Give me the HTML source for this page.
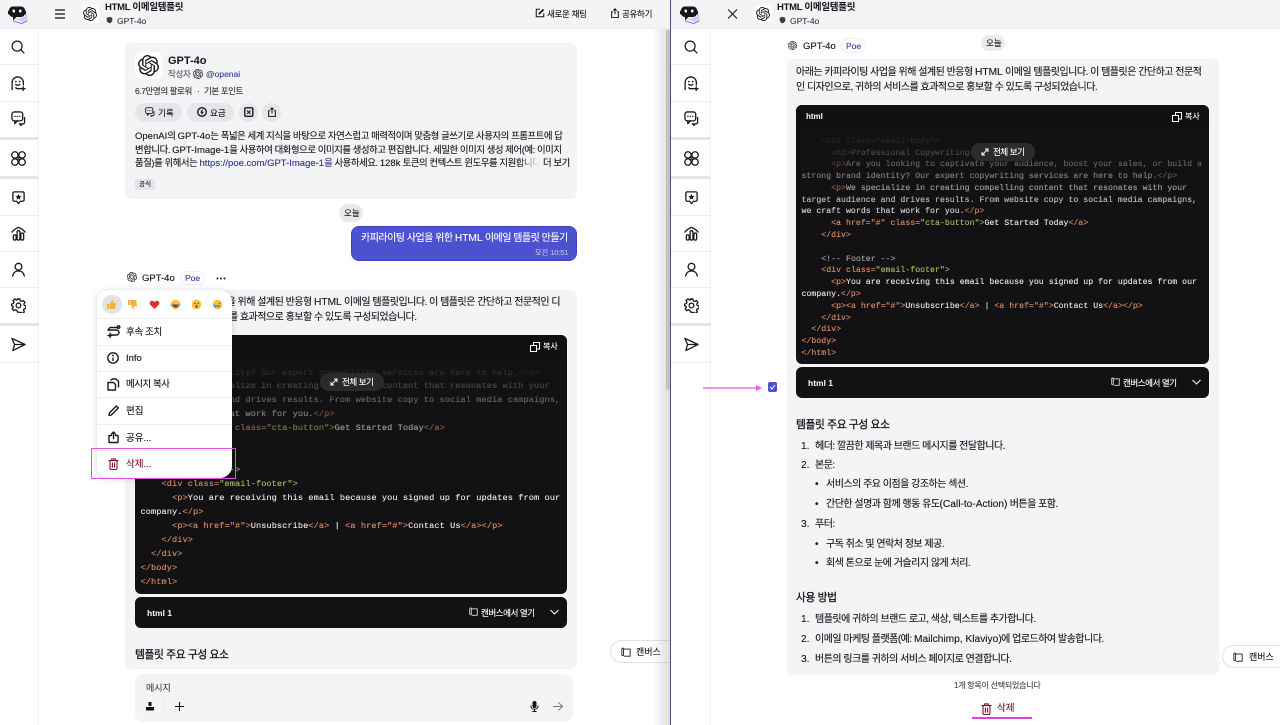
<!DOCTYPE html>
<html lang="ko"><head><meta charset="utf-8"><title>HTML 이메일템플릿</title>
<style>
*{box-sizing:border-box}
html,body{margin:0;padding:0;width:1280px;height:725px;overflow:hidden;background:#fff}
body{font-family:"Liberation Sans","Noto Sans CJK KR",sans-serif;color:#15151a;font-size:10px;position:relative}
.a{position:absolute}
.t{position:absolute;white-space:nowrap;line-height:14px;height:14px;-webkit-text-stroke:.12px currentColor}
.b{font-weight:700;-webkit-text-stroke:0}
.h{-webkit-text-stroke:.3px currentColor}
.m{font-size:10px;letter-spacing:-.05em}
.l{letter-spacing:0;font-size:10.2px}
.n{letter-spacing:-.035em}
.bio{font-size:9.4px;letter-spacing:-.045em}
.bio .l{font-size:9.5px;letter-spacing:0}
.bar{position:absolute;background:#f4f4f6}
.line{position:absolute;background:#eeeef0;height:1px}
.thick{position:absolute;background:#e4e4e8;height:3px}
pre{position:absolute;margin:0;font-family:"Liberation Mono",monospace;color:#ededed;white-space:pre;-webkit-text-stroke:.1px currentColor}
.k{color:#e0906a}.s{color:#a6c45e}.c{color:#a5a5a5}
svg{position:absolute;overflow:visible}
.i{fill:none;stroke:#1a1a1f;stroke-width:1.4;stroke-linecap:round;stroke-linejoin:round}
.pill{position:absolute;border-radius:10px;background:#2b2b2d;height:18px}
</style></head><body>

<svg width="0" height="0" style="position:absolute">
<defs>
<symbol id="logo" viewBox="0 0 21 21"><path d="M7 15l8 2.500 4.500-2.500V9.500L17 10v3z" fill="#d8c4f8"/><path d="M5 17l9 2.500 5.500-3" fill="none" stroke="#8f6cf0" stroke-width="1"/><rect x="0" y="6.500" width="2" height="4" rx="1" fill="#15151a"/><rect x="16" y="6.500" width="2" height="4" rx="1" fill="#15151a"/><rect x="1" y="2.500" width="16" height="10.500" rx="4" fill="#15151a"/><rect x="4.500" y="5.500" width="2.500" height="3" rx="1" fill="#fff"/><rect x="11" y="5.500" width="2.500" height="3" rx="1" fill="#fff"/><path d="M5 12.500v4l4-4z" fill="#15151a"/></symbol>
<symbol id="oai" viewBox="0 0 24 24"><path fill="#15151a" d="M22.2819 9.8211a5.9847 5.9847 0 0 0-.5157-4.9108 6.0462 6.0462 0 0 0-6.5098-2.9A6.0651 6.0651 0 0 0 4.9807 4.1818a5.9847 5.9847 0 0 0-3.9977 2.9 6.0462 6.0462 0 0 0 .7427 7.0966 5.98 5.98 0 0 0 .511 4.9107 6.051 6.051 0 0 0 6.5146 2.9001A5.9847 5.9847 0 0 0 13.2599 24a6.0557 6.0557 0 0 0 5.7718-4.2058 5.9894 5.9894 0 0 0 3.9977-2.9001 6.0557 6.0557 0 0 0-.7475-7.0729zm-9.022 12.6081a4.4755 4.4755 0 0 1-2.8764-1.0408l.1419-.0804 4.7783-2.7582a.7948.7948 0 0 0 .3927-.6813v-6.7369l2.02 1.1686a.071.071 0 0 1 .038.052v5.5826a4.504 4.504 0 0 1-4.4945 4.4944zm-9.6607-4.1254a4.4708 4.4708 0 0 1-.5346-3.0137l.142.0852 4.783 2.7582a.7712.7712 0 0 0 .7806 0l5.8428-3.3685v2.3324a.0804.0804 0 0 1-.0332.0615L9.74 19.9502a4.4992 4.4992 0 0 1-6.1408-1.6464zM2.3408 7.8956a4.485 4.485 0 0 1 2.3655-1.9728V11.6a.7664.7664 0 0 0 .3879.6765l5.8144 3.3543-2.0201 1.1685a.0757.0757 0 0 1-.071 0l-4.8303-2.7865A4.504 4.504 0 0 1 2.3408 7.872zm16.5963 3.8558L13.1038 8.364 15.1192 7.2a.0757.0757 0 0 1 .071 0l4.8303 2.7913a4.4944 4.4944 0 0 1-.6765 8.1042v-5.6772a.79.79 0 0 0-.407-.667zm2.0107-3.0231l-.142-.0852-4.7735-2.7818a.7759.7759 0 0 0-.7854 0L9.409 9.2297V6.8974a.0662.0662 0 0 1 .0284-.0615l4.8303-2.7866a4.4992 4.4992 0 0 1 6.6802 4.66zM8.3065 12.863l-2.02-1.1638a.0804.0804 0 0 1-.038-.0567V6.0742a4.4992 4.4992 0 0 1 7.3757-3.4537l-.142.0805L8.704 5.459a.7948.7948 0 0 0-.3927.6813zm1.0976-2.3654l2.602-1.4998 2.6069 1.4998v2.9994l-2.5974 1.4997-2.6067-1.4997Z"/></symbol>
<symbol id="search" viewBox="0 0 16 16"><circle class="i" cx="7" cy="7" r="5.700"/><path class="i" d="M11.200 11.200l3.600 3.600"/></symbol>
<symbol id="ghost" viewBox="0 0 16 16"><path class="i" d="M1.200 14.500V7a6 6 0 0 1 12 0v2.500M10 13.500H6.500c-.8 0-1.200-.5-1.200-1.200"/><circle cx="5.200" cy="6" r=".9" fill="#1a1a1f"/><circle cx="9.200" cy="6" r=".9" fill="#1a1a1f"/><path class="i" d="M5 9c1.300 1 3 1 4.400 0M13 11.500v4M11 13.500h4"/></symbol>
<symbol id="chats" viewBox="0 0 16 16"><rect class="i" x="1" y="1" width="11.500" height="9.500" rx="2.500"/><path class="i" d="M4 10.500v3l3-3M14.500 7v5c0 1-1 1.800-2 1.800H9l2 1.600"/><circle cx="4.200" cy="5.700" r=".8" fill="#1a1a1f"/><circle cx="6.800" cy="5.700" r=".8" fill="#1a1a1f"/><circle cx="9.400" cy="5.700" r=".8" fill="#1a1a1f"/></symbol>
<symbol id="apps" viewBox="0 0 16 16"><g class="i"><circle cx="4.200" cy="4.200" r="3.400"/><circle cx="11.800" cy="4.200" r="3.400"/><circle cx="4.200" cy="11.800" r="3.400"/><circle cx="11.800" cy="11.800" r="3.400"/><path d="M6.800 6.800l2.400 2.400M9.200 6.800L6.800 9.200"/></g></symbol>
<symbol id="star" viewBox="0 0 16 16"><path class="i" d="M3.500 2h9A1.500 1.500 0 0 1 14 3.500v7a1.500 1.500 0 0 1-1.500 1.500H10l-2 2.500L6 12H3.500A1.500 1.500 0 0 1 2 10.500v-7A1.500 1.500 0 0 1 3.500 2z"/><path d="M8 4.200l1 2.100 2.200.3-1.600 1.500.4 2.200L8 9.200l-2 1.100.4-2.200L4.800 6.600 7 6.300z" fill="#1a1a1f"/></symbol>
<symbol id="build" viewBox="0 0 16 16"><path class="i" d="M1 6.500C3 4 5.500 2.500 8 1.500c2.500 1 5 2.500 7 5"/><rect class="i" x="6.500" y="5" width="3" height="10" rx="1.400"/><rect class="i" x="2.500" y="9.500" width="3" height="5.500" rx="1.400"/><rect class="i" x="10.500" y="7.500" width="3" height="7.500" rx="1.400"/></symbol>
<symbol id="user" viewBox="0 0 16 16"><circle class="i" cx="8" cy="5" r="3.600"/><path class="i" d="M1.800 15c.5-3.500 3-5.500 6.200-5.500s5.700 2 6.200 5.500"/></symbol>
<symbol id="gear" viewBox="0 0 16 16"><circle class="i" cx="8" cy="8" r="2.500"/><path class="i" d="M6.700 1h2.600l.4 2 1.500.7 1.800-1 1.700 2-1.200 1.700.4 1.500 1.900.6v2.600l-2 .5-.7 1.400 1 1.800-2 1.700-1.600-1.200-1.600.4L8 15H6.700l-.6-1.800-1.500-.7-1.800 1-1.700-2 1.200-1.700L1.900 9 .5 8.400V6.500l1.800-.6.700-1.500-1-1.700 2-1.700 1.700 1.200 1.500-.6z" transform="translate(.2 0)"/></symbol>
<symbol id="send" viewBox="0 0 16 16"><path class="i" d="M1 1.500L15 8 2 14.500l1.800-6.500zM3.800 8H15"/></symbol>
<symbol id="trash" viewBox="0 0 12 13"><path d="M1 2.800h10M4 2.500V1h4v1.500M2.200 3v8.300c0 .7.500 1.200 1.200 1.200h5.200c.7 0 1.200-.5 1.200-1.200V3M4.800 5.500v4.500M7.200 5.500v4.500" fill="none" stroke="#7a1234" stroke-width="1.200" stroke-linecap="round"/></symbol>
<symbol id="canvas" viewBox="0 0 12 12"><path d="M3 2.500h8v8.500H3.500M3 2.500C3 .8 1 .8 1 2.500v6.500c0 1.800 2 1.800 2 0z" fill="none" stroke="currentColor" stroke-width="1"/></symbol>
<symbol id="compose" viewBox="0 0 12 12"><path d="M10.500 6.500v4h-9v-9h4.500" fill="none" stroke="#111" stroke-width="1.200"/><path d="M4 8l.5-2L9.500 1 11 2.500 6 7.500z" fill="#111"/></symbol>
<symbol id="share" viewBox="0 0 12 12"><path d="M3.500 4.500H2v7h8v-7H8.500M6 7.500V1M4 3l2-2 2 2" fill="none" stroke="#111" stroke-width="1.200"/></symbol>
<symbol id="shield" viewBox="0 0 10 10"><path d="M5 .5l4 1.300v3.700c0 2-2 3.500-4 4.200-2-.7-4-2.200-4-4.200V1.800z" fill="#3c3c42"/></symbol>
</defs>
</svg>

<!-- LEFT PANE -->
<div class="bar" style="left:0;top:0;width:670px;height:29px;border-bottom:1px solid #ececee"></div>
<div class="a" style="left:38px;top:29px;width:1px;height:696px;background:#f0f0f2"></div>
<svg style="left:8px;top:4px" width="21" height="21"><use href="#logo"/></svg>
<div class="line" style="left:0;top:64px;width:38px"></div>
<div class="line" style="left:0;top:101px;width:38px"></div>
<div class="thick" style="left:0;top:137px;width:38px"></div>
<div class="thick" style="left:0;top:176px;width:38px"></div>
<div class="line" style="left:0;top:215px;width:38px"></div>
<div class="line" style="left:0;top:251px;width:38px"></div>
<div class="line" style="left:0;top:287px;width:38px"></div>
<div class="thick" style="left:0;top:323px;width:38px"></div>
<div class="line" style="left:0;top:362px;width:38px"></div>
<svg style="left:11px;top:40px" width="14" height="14"><use href="#search"/></svg>
<svg style="left:11px;top:76px" width="15" height="15"><use href="#ghost"/></svg>
<svg style="left:11px;top:111px" width="15" height="15"><use href="#chats"/></svg>
<svg style="left:11px;top:151px" width="15" height="15"><use href="#apps"/></svg>
<svg style="left:11px;top:190px" width="15" height="15"><use href="#star"/></svg>
<svg style="left:11px;top:226px" width="15" height="15"><use href="#build"/></svg>
<svg style="left:11px;top:262px" width="15" height="15"><use href="#user"/></svg>
<svg style="left:11px;top:298px" width="15" height="15"><use href="#gear"/></svg>
<svg style="left:11px;top:337px" width="15" height="15"><use href="#send"/></svg>

<svg style="left:55px;top:9px" width="10" height="10"><path d="M0 1h10M0 5h10M0 9h10" stroke="#111" stroke-width="1.300"/></svg>
<div class="a" style="left:81px;top:5px;width:18px;height:18px;border-radius:5px;background:#fff"></div>
<svg style="left:83px;top:7px" width="14" height="14"><use href="#oai"/></svg>
<div class="t b" style="left:105px;top:1px;font-size:9.500px;letter-spacing:-.03em">HTML 이메일템플릿</div>
<svg style="left:106px;top:16px" width="7" height="8"><use href="#shield"/></svg>
<div class="t" style="left:117px;top:13.500px;font-size:8.500px;color:#3f3f46">GPT-4o</div>
<svg style="left:535px;top:8px" width="10" height="10"><use href="#compose"/></svg>
<div class="t n" style="left:547px;top:7px;font-size:8.500px">새로운 채팅</div>
<svg style="left:610px;top:8px" width="10" height="10"><use href="#share"/></svg>
<div class="t n" style="left:622px;top:7px;font-size:8.500px">공유하기</div>

<!-- Bot card -->
<div class="a" style="left:125px;top:43px;width:452px;height:156px;background:#f4f4f6;border-radius:6px"></div>
<div class="a" style="left:135px;top:52px;width:27px;height:27px;background:#fff;border-radius:7px"></div>
<svg style="left:138px;top:55px" width="21" height="21"><use href="#oai"/></svg>
<div class="t b" style="left:168px;top:53.500px;font-size:11px">GPT-4o</div>
<div class="t n" style="left:168px;top:67px;font-size:8.500px;color:#55555c">작성자</div>
<svg style="left:193px;top:69px" width="10" height="10"><use href="#oai"/></svg>
<div class="t" style="left:206px;top:67px;font-size:8.500px;color:#3a3f9a">@openai</div>
<div class="t n" style="left:135px;top:84px;font-size:8.500px;color:#333;letter-spacing:-.05em">6.7만명의 팔로워</div>
<div class="t" style="left:197px;top:84px;font-size:8.500px;color:#333">·</div>
<div class="t n" style="left:204px;top:84px;font-size:8.500px;color:#333;letter-spacing:-.05em">기본 포인트</div>
<div class="a" style="left:135px;top:103px;width:47px;height:19px;border-radius:10px;background:#e6e6ea"></div>
<div class="a" style="left:187px;top:103px;width:47px;height:19px;border-radius:10px;background:#e6e6ea"></div>
<div class="a" style="left:239px;top:103px;width:19px;height:19px;border-radius:10px;background:#e6e6ea"></div>
<div class="a" style="left:262px;top:103px;width:19px;height:19px;border-radius:10px;background:#e6e6ea"></div>
<svg style="left:145px;top:107px" width="10" height="10"><use href="#chats"/></svg>
<div class="t" style="left:158px;top:105.500px;font-size:8.500px">기록</div>
<svg style="left:197px;top:107px" width="10" height="10"><circle class="i" cx="5" cy="5" r="4.300"/><path d="M5.500 2.500L4 5.200H6L4.500 7.500" stroke="#111" fill="none"/></svg>
<div class="t" style="left:210px;top:105.500px;font-size:8.500px">요금</div>
<svg style="left:244px;top:107px" width="10" height="10"><rect class="i" x=".8" y=".8" width="8" height="8.500" rx="1"/><path d="M3 3.500l3.500 3.500M6.500 3.500L3 7" stroke="#111"/></svg>
<svg style="left:267px;top:107px" width="10" height="10"><use href="#share"/></svg>
<div class="t bio" style="left:135px;top:129px"><span class="l">OpenAI</span>의 <span class="l">GPT-4o</span>는 폭넓은 세계 지식을 바탕으로 자연스럽고 매력적이며 맞춤형 글쓰기로 사용자의 프롬프트에 답</div>
<div class="t bio" style="left:135px;top:142.500px">변합니다. <span class="l">GPT-Image-1</span>을 사용하여 대화형으로 이미지를 생성하고 편집합니다. 세밀한 이미지 생성 제어(예: 이미지</div>
<div class="t bio" style="left:135px;top:155.500px">품질)를 위해서는 <span style="color:#2f3591"><span class="l">https://poe.com/GPT-Image-1</span>을</span> 사용하세요. <span class="l">128k</span> 토큰의 컨텍스트 윈도우를 지원합니다.</div>
<div class="a" style="left:518px;top:155px;width:22px;height:14px;background:linear-gradient(90deg,rgba(244,244,246,0),#f4f4f6)"></div>
<div class="t bio" style="left:540px;top:155.500px;background:#f4f4f6;width:30px;padding-left:3px">더 보기</div>
<div class="a" style="left:135px;top:179px;width:20px;height:11px;border-radius:2px;background:#e4e4e8"></div>
<div class="t" style="left:139px;top:177.500px;font-size:6.500px">공식</div>

<div class="a" style="left:339px;top:204px;width:24px;height:18px;border-radius:9px;background:#e9e9ec"></div>
<div class="t" style="left:344px;top:206px;font-size:8.500px">오늘</div>

<div class="a" style="left:351px;top:226px;width:226px;height:35px;border-radius:8px;background:#4c51cf;border:1px solid #3c42c4"></div>
<div class="t m" style="left:361px;top:232px;color:#fff">카피라이팅 사업을 위한 <span class="l">HTML</span> 이메일 템플릿 만들기</div>
<div class="t" style="left:535px;top:245.500px;font-size:7.200px;color:#c3c5f0">오전 10:51</div>

<svg style="left:127px;top:272px" width="10" height="10"><use href="#oai"/></svg>
<div class="t" style="left:142px;top:271.500px;font-size:9.500px">GPT-4o</div>
<div class="a" style="left:180px;top:271px;width:25px;height:14px;border-radius:7px;background:#fff;border:1px solid #eeeef0"></div>
<div class="t" style="left:185px;top:271px;font-size:8.500px;color:#3a3f9a">Poe</div>
<svg style="left:216px;top:277px" width="10" height="3"><circle cx="1.500" cy="1.500" r="1" fill="#222"/><circle cx="5" cy="1.500" r="1" fill="#222"/><circle cx="8.500" cy="1.500" r="1" fill="#222"/></svg>

<div class="a" style="left:125px;top:290px;width:452px;height:379px;background:#f4f4f6;border-radius:6px"></div>
<div class="t m" style="left:135px;top:295.500px">아래는 카피라이팅 사업을 위해 설계된 반응형 <span class="l">HTML</span> 이메일 템플릿입니다. 이 템플릿은 간단하고 전문적인 디</div>
<div class="t m" style="left:135px;top:310.500px">자인으로, 귀하의 서비스를 효과적으로 홍보할 수 있도록 구성되었습니다.</div>

<!-- left code -->
<div class="a" style="left:135px;top:335px;width:432px;height:259px;background:#121214;border-radius:6px;overflow:hidden">
<pre style="left:5.500px;top:31.500px;font-size:8.620px;line-height:13.950px;letter-spacing:.08px">strong brand identity? Our expert copywriting services are here to help.<span class="k">&lt;/p&gt;</span>
      <span class="k">&lt;p&gt;</span>We specialize in creating compelling content that resonates with your
target audience and drives results. From website copy to social media campaigns,
we craft words that work for you.<span class="k">&lt;/p&gt;</span>
      <span class="k">&lt;a href=</span><span class="k">"#"</span> <span class="k">class=</span><span class="s">"cta-button"</span><span class="k">&gt;</span>Get Started Today<span class="k">&lt;/a&gt;</span>
    <span class="k">&lt;/div&gt;</span>

    <span class="c">&lt;!-- Footer --&gt;</span>
    <span class="k">&lt;div class=</span><span class="s">"email-footer"</span><span class="k">&gt;</span>
      <span class="k">&lt;p&gt;</span>You are receiving this email because you signed up for updates from our
company.<span class="k">&lt;/p&gt;</span>
      <span class="k">&lt;p&gt;&lt;a href=</span><span class="k">"#"</span><span class="k">&gt;</span>Unsubscribe<span class="k">&lt;/a&gt;</span> | <span class="k">&lt;a href=</span><span class="k">"#"</span><span class="k">&gt;</span>Contact Us<span class="k">&lt;/a&gt;&lt;/p&gt;</span>
    <span class="k">&lt;/div&gt;</span>
  <span class="k">&lt;/div&gt;</span>
<span class="k">&lt;/body&gt;</span>
<span class="k">&lt;/html&gt;</span></pre>
<div class="a" style="left:0;top:24px;width:432px;height:105px;background:linear-gradient(#121214 0%,rgba(18,18,20,.72) 30%,rgba(18,18,20,0) 100%)"></div>
<div class="a" style="left:0;top:0;width:432px;height:24px;background:#101012"></div>
</div>
<svg style="left:530px;top:342px" width="10" height="10"><path d="M3.500 3.500v-3h6v6.500h-3M.5 3.500h6V9.500h-6z" fill="none" stroke="#fff" stroke-width="1"/></svg>
<div class="t" style="left:543px;top:340px;font-size:8px;color:#fff">복사</div>
<div class="pill" style="left:320px;top:373px;width:64px"></div>
<svg style="left:330px;top:378px" width="8" height="8"><path d="M1 7l6-6M4 1h3v3M1 4v3h3" fill="none" stroke="#fff" stroke-width="1"/></svg>
<div class="t" style="left:342px;top:375px;font-size:8.500px;color:#fff;letter-spacing:-.05em">전체 보기</div>

<div class="a" style="left:135px;top:597px;width:432px;height:31px;background:#121214;border-radius:6px"></div>
<div class="t b" style="left:147px;top:605.500px;font-size:8.500px;color:#fff">html 1</div>
<svg style="left:469px;top:607px;color:#fff" width="9" height="9"><use href="#canvas"/></svg>
<div class="t" style="left:481px;top:605.500px;font-size:8.500px;color:#fff;letter-spacing:-.05em">캔버스에서 열기</div>
<svg style="left:550px;top:609px" width="9" height="6"><path d="M.5 1l4 4 4-4" fill="none" stroke="#fff" stroke-width="1"/></svg>
<div class="t h" style="left:135px;top:647.500px;font-size:10.700px;letter-spacing:-.03em">템플릿 주요 구성 요소</div>

<div class="a" style="left:135px;top:674px;width:438px;height:48px;background:#f4f4f6;border-radius:8px"></div>
<div class="t" style="left:146px;top:681px;font-size:9px;color:#444">메시지</div>
<svg style="left:145px;top:701px" width="10" height="11"><path d="M3.500 1h3v4h-3zM1 6h8v3.500H1z" fill="#111"/></svg>
<div class="a" style="left:164px;top:700px;width:1px;height:13px;background:#eaeaec"></div>
<svg style="left:175px;top:702px" width="9" height="9"><path d="M4.500 0v9M0 4.500h9" stroke="#111" stroke-width="1.100"/></svg>
<svg style="left:530px;top:701px" width="9" height="11"><rect x="2.500" y="0" width="4" height="7" rx="2" fill="#111"/><path d="M.8 4.500c0 5 7.400 5 7.400 0M4.500 8v2.500M2.500 10.500h4" fill="none" stroke="#111"/></svg>
<svg style="left:553px;top:702px" width="10" height="9"><path d="M0 4.500h9M5.500 .5l4 4-4 4" fill="none" stroke="#77777c" stroke-width="1"/></svg>

<div class="a" style="left:610px;top:640px;width:60px;height:23px;border-radius:12px 0 0 12px;background:#fff;border:1px solid #e0e0e3;border-right:0"></div>
<svg style="left:621px;top:647px;color:#111" width="10" height="10"><use href="#canvas"/></svg>
<div class="t" style="left:636px;top:645px;font-size:9px">캔버스</div>

<!-- shadow & scrollbar -->
<div class="a" style="left:652px;top:29px;width:18px;height:696px;background:linear-gradient(90deg,rgba(150,150,155,0),rgba(150,150,155,.32))"></div>
<div class="a" style="left:666px;top:30px;width:4px;height:360px;background:#c2c2c6;border-radius:2px"></div>
<div class="a" style="left:670px;top:0;width:1px;height:725px;background:#4f4a78"></div>

<!-- Menu -->
<div class="a" style="left:97px;top:290px;width:135px;height:188px;background:#fff;border-radius:12px;box-shadow:0 1px 8px rgba(0,0,0,.16)"></div>
<div class="a" style="left:102px;top:295px;width:20px;height:19px;border-radius:10px;background:#e2e2e6"></div>
<svg style="left:106px;top:299px" width="11" height="11"><path d="M1 5h2.500v5H1zM4 5l2-4c1 0 1.500 1 1 3h3l-.8 6H4z" fill="#f2b33d"/></svg>
<svg style="left:127px;top:299px" width="11" height="11"><path d="M1 1h2.500v5H1zM4 1v5l2 4c1 0 1.500-1 1-3h3L9.200 1z" fill="#f2b33d"/></svg>
<svg style="left:149px;top:299px" width="11" height="11"><path d="M5.500 10L1 5.500C-.5 3 2.800 0 5.500 3c2.700-3 6-0 4.500 2.500z" fill="#d9342b"/></svg>
<svg style="left:170px;top:299px" width="11" height="11"><circle cx="5.500" cy="5.500" r="4.800" fill="#f5c33b"/><path d="M2.500 5.500h6c0 4-6 4-6 0z" fill="#7a3a1e"/><path d="M1 5l2 2M10 5L8 7" stroke="#4aa6e8" stroke-width="1.500"/></svg>
<svg style="left:191px;top:299px" width="11" height="11"><circle cx="5.500" cy="5.500" r="4.800" fill="#f5c33b"/><circle cx="3.800" cy="4.500" r=".7" fill="#553"/><circle cx="7.200" cy="4.500" r=".7" fill="#553"/><circle cx="5.500" cy="7.500" r="1.200" fill="#7a3a1e"/></svg>
<svg style="left:212px;top:299px" width="11" height="11"><circle cx="5.500" cy="5.500" r="4.800" fill="#f5c33b"/><path d="M3 8c1.500-1.500 3.500-1.500 5 0" stroke="#7a3a1e" fill="none"/><path d="M2.500 5v3" stroke="#4aa6e8" stroke-width="1.500"/><circle cx="7.500" cy="4.500" r=".7" fill="#553"/></svg>
<div class="line" style="left:97px;top:318px;width:135px"></div>
<div class="line" style="left:97px;top:345px;width:135px"></div>
<div class="line" style="left:97px;top:371px;width:135px"></div>
<div class="line" style="left:97px;top:397px;width:135px"></div>
<div class="line" style="left:97px;top:424px;width:135px"></div>
<div class="line" style="left:97px;top:450px;width:135px"></div>
<svg style="left:107px;top:325px" width="13" height="13"><path class="i" d="M1 5h8.500a2.500 2.500 0 0 1 0 5H3M11 2.500H3.500a2 2 0 0 0-1.500 3M3 8.500v4M1 10.500h4"/><circle class="i" cx="11.500" cy="2" r="1.300"/></svg>
<div class="t n" style="left:126px;top:326px;font-size:9.500px">후속 조치</div>
<svg style="left:107px;top:352px" width="12" height="12"><circle class="i" cx="6" cy="6" r="5.200"/><path d="M6 5.500v3.500" stroke="#111" stroke-width="1.300"/><circle cx="6" cy="3.500" r=".9" fill="#111"/></svg>
<div class="t" style="left:126px;top:352px;font-size:9.500px">Info</div>
<svg style="left:107px;top:378px" width="12" height="13"><path class="i" d="M1 4.500h5.500l2 2v5.500H1zM4 2l1.500-1H9l2.500 2.500v5.500"/></svg>
<div class="t n" style="left:126px;top:378px;font-size:9.500px;letter-spacing:-.05em">메시지 복사</div>
<svg style="left:108px;top:405px" width="11" height="11"><path class="i" d="M1 10.500l.6-2.800L8.300 1l2 2-6.700 6.800z"/></svg>
<div class="t" style="left:126px;top:405px;font-size:9.500px">편집</div>
<svg style="left:108px;top:431px" width="11" height="12"><path class="i" d="M3.500 4.500H1v7h9v-7H7.500M5.500 7.500V1M3.500 3l2-2 2 2"/></svg>
<div class="t" style="left:126px;top:431.500px;font-size:9.500px">공유...</div>
<svg style="left:108px;top:458px" width="11" height="12"><use href="#trash"/></svg>
<div class="t" style="left:126px;top:458px;font-size:9.500px;color:#7a1234">삭제...</div>
<div class="a" style="left:91px;top:448px;width:145px;height:31px;border:1px solid #e24fe6"></div>

<!-- RIGHT PANE -->
<div class="bar" style="left:671px;top:0;width:609px;height:29px;border-bottom:1px solid #ececee"></div>
<div class="a" style="left:710px;top:29px;width:1px;height:696px;background:#f0f0f2"></div>
<svg style="left:680px;top:4px" width="21" height="21"><use href="#logo"/></svg>
<div class="line" style="left:671px;top:64px;width:39px"></div>
<div class="line" style="left:671px;top:101px;width:39px"></div>
<div class="thick" style="left:671px;top:137px;width:39px"></div>
<div class="thick" style="left:671px;top:176px;width:39px"></div>
<div class="line" style="left:671px;top:215px;width:39px"></div>
<div class="line" style="left:671px;top:251px;width:39px"></div>
<div class="line" style="left:671px;top:287px;width:39px"></div>
<div class="thick" style="left:671px;top:323px;width:39px"></div>
<div class="line" style="left:671px;top:362px;width:39px"></div>
<svg style="left:684px;top:40px" width="14" height="14"><use href="#search"/></svg>
<svg style="left:684px;top:76px" width="15" height="15"><use href="#ghost"/></svg>
<svg style="left:684px;top:111px" width="15" height="15"><use href="#chats"/></svg>
<svg style="left:684px;top:151px" width="15" height="15"><use href="#apps"/></svg>
<svg style="left:684px;top:190px" width="15" height="15"><use href="#star"/></svg>
<svg style="left:684px;top:226px" width="15" height="15"><use href="#build"/></svg>
<svg style="left:684px;top:262px" width="15" height="15"><use href="#user"/></svg>
<svg style="left:684px;top:298px" width="15" height="15"><use href="#gear"/></svg>
<svg style="left:684px;top:337px" width="15" height="15"><use href="#send"/></svg>

<svg style="left:728px;top:9px" width="9" height="10"><path d="M0 .5l9 9M9 .5l-9 9" stroke="#111" stroke-width="1"/></svg>
<div class="a" style="left:754px;top:5px;width:18px;height:18px;border-radius:5px;background:#fff"></div>
<svg style="left:756px;top:7px" width="14" height="14"><use href="#oai"/></svg>
<div class="t b" style="left:777px;top:1px;font-size:9.500px;letter-spacing:-.03em">HTML 이메일템플릿</div>
<svg style="left:779px;top:16px" width="7" height="8"><use href="#shield"/></svg>
<div class="t" style="left:790px;top:13.500px;font-size:8.500px;color:#3f3f46">GPT-4o</div>

<svg style="left:788px;top:41px" width="9" height="9"><use href="#oai"/></svg>
<div class="t" style="left:803px;top:39.500px;font-size:9.500px">GPT-4o</div>
<div class="a" style="left:841px;top:38px;width:25px;height:15px;border-radius:7px;background:#fff;border:1px solid #eeeef0"></div>
<div class="t" style="left:846px;top:39px;font-size:8.500px;color:#3a3f9a">Poe</div>
<div class="a" style="left:981px;top:35px;width:24px;height:16px;border-radius:8px;background:#ebebee"></div>
<div class="t" style="left:986px;top:36px;font-size:8.500px">오늘</div>

<div class="a" style="left:787px;top:59px;width:432px;height:616px;background:#f4f4f6;border-radius:6px"></div>
<div class="t m" style="left:796px;top:65.500px">아래는 카피라이팅 사업을 위해 설계된 반응형 <span class="l">HTML</span> 이메일 템플릿입니다. 이 템플릿은 간단하고 전문적</div>
<div class="t m" style="left:796px;top:80.500px">인 디자인으로, 귀하의 서비스를 효과적으로 홍보할 수 있도록 구성되었습니다.</div>

<div class="a" style="left:796px;top:105px;width:413px;height:259px;background:#121214;border-radius:6px;overflow:hidden">
<pre style="left:5.500px;top:19px;font-size:8.200px;line-height:11.780px;letter-spacing:.03px">  <span class="k">&lt;div class=</span><span class="s">"email-header"</span><span class="k">&gt;</span>
    <span class="k">&lt;div class=</span><span class="s">"email-body"</span><span class="k">&gt;</span>
      <span class="k">&lt;h2&gt;</span>Professional Copywriting<span class="k">&lt;/h2&gt;</span>
      <span class="k">&lt;p&gt;</span>Are you looking to captivate your audience, boost your sales, or build a
strong brand identity? Our expert copywriting services are here to help.<span class="k">&lt;/p&gt;</span>
      <span class="k">&lt;p&gt;</span>We specialize in creating compelling content that resonates with your
target audience and drives results. From website copy to social media campaigns,
we craft words that work for you.<span class="k">&lt;/p&gt;</span>
      <span class="k">&lt;a href=</span><span class="k">"#"</span> <span class="k">class=</span><span class="s">"cta-button"</span><span class="k">&gt;</span>Get Started Today<span class="k">&lt;/a&gt;</span>
    <span class="k">&lt;/div&gt;</span>

    <span class="c">&lt;!-- Footer --&gt;</span>
    <span class="k">&lt;div class=</span><span class="s">"email-footer"</span><span class="k">&gt;</span>
      <span class="k">&lt;p&gt;</span>You are receiving this email because you signed up for updates from our
company.<span class="k">&lt;/p&gt;</span>
      <span class="k">&lt;p&gt;&lt;a href=</span><span class="k">"#"</span><span class="k">&gt;</span>Unsubscribe<span class="k">&lt;/a&gt;</span> | <span class="k">&lt;a href=</span><span class="k">"#"</span><span class="k">&gt;</span>Contact Us<span class="k">&lt;/a&gt;&lt;/p&gt;</span>
    <span class="k">&lt;/div&gt;</span>
  <span class="k">&lt;/div&gt;</span>
<span class="k">&lt;/body&gt;</span>
<span class="k">&lt;/html&gt;</span></pre>
<div class="a" style="left:0;top:24px;width:413px;height:90px;background:linear-gradient(#121214 0%,rgba(18,18,20,.72) 30%,rgba(18,18,20,0) 100%)"></div>
<div class="a" style="left:0;top:0;width:413px;height:24px;background:#101012"></div>
</div>
<div class="t b" style="left:806px;top:110px;font-size:8px;color:#fff">html</div>
<svg style="left:1172px;top:112px" width="10" height="10"><path d="M3.500 3.500v-3h6v6.500h-3M.5 3.500h6V9.500h-6z" fill="none" stroke="#fff" stroke-width="1"/></svg>
<div class="t" style="left:1185px;top:110px;font-size:8px;color:#fff">복사</div>
<div class="pill" style="left:971px;top:143px;width:64px"></div>
<svg style="left:981px;top:148px" width="8" height="8"><path d="M1 7l6-6M4 1h3v3M1 4v3h3" fill="none" stroke="#fff" stroke-width="1"/></svg>
<div class="t" style="left:993px;top:145px;font-size:8.500px;color:#fff;letter-spacing:-.05em">전체 보기</div>

<div class="a" style="left:796px;top:367px;width:413px;height:31px;background:#121214;border-radius:6px"></div>
<div class="t b" style="left:808px;top:375.500px;font-size:8.500px;color:#fff">html 1</div>
<svg style="left:1111px;top:377px;color:#fff" width="9" height="9"><use href="#canvas"/></svg>
<div class="t" style="left:1123px;top:375.500px;font-size:8.500px;color:#fff;letter-spacing:-.05em">캔버스에서 열기</div>
<svg style="left:1192px;top:379px" width="9" height="6"><path d="M.5 1l4 4 4-4" fill="none" stroke="#fff" stroke-width="1"/></svg>

<svg style="left:703px;top:384px" width="60" height="8"><path d="M0 4h54" stroke="#e85ae8" stroke-width="1.300"/><path d="M53 1l6 3-6 3z" fill="#e85ae8"/></svg>
<div class="a" style="left:768px;top:382px;width:9px;height:10px;background:#4a52d1;border-radius:2px"></div>
<svg style="left:769px;top:384px" width="7" height="6"><path d="M1 3l2 2 3-4" fill="none" stroke="#fff" stroke-width="1"/></svg>

<div class="t h" style="left:796px;top:417.500px;font-size:10.700px;letter-spacing:-.03em">템플릿 주요 구성 요소</div>
<div class="t m" style="left:801px;top:439.500px"><span class="l">1.</span></div><div class="t m" style="left:815px;top:439.500px">헤더: 깔끔한 제목과 브랜드 메시지를 전달합니다.</div>
<div class="t m" style="left:801px;top:458.500px"><span class="l">2.</span></div><div class="t m" style="left:815px;top:458.500px">본문:</div>
<div class="t m" style="left:815px;top:478px">•</div><div class="t m" style="left:826px;top:478px">서비스의 주요 이점을 강조하는 섹션.</div>
<div class="t m" style="left:815px;top:498px">•</div><div class="t m" style="left:826px;top:498px">간단한 설명과 함께 행동 유도<span class="l">(Call-to-Action)</span> 버튼을 포함.</div>
<div class="t m" style="left:801px;top:518px"><span class="l">3.</span></div><div class="t m" style="left:815px;top:518px">푸터:</div>
<div class="t m" style="left:815px;top:537.500px">•</div><div class="t m" style="left:826px;top:537.500px">구독 취소 및 연락처 정보 제공.</div>
<div class="t m" style="left:815px;top:557px">•</div><div class="t m" style="left:826px;top:557px">회색 톤으로 눈에 거슬리지 않게 처리.</div>
<div class="t h" style="left:796px;top:590.500px;font-size:10.700px;letter-spacing:-.03em">사용 방법</div>
<div class="t m" style="left:801px;top:613px"><span class="l">1.</span></div><div class="t m" style="left:815px;top:613px">템플릿에 귀하의 브랜드 로고, 색상, 텍스트를 추가합니다.</div>
<div class="t m" style="left:801px;top:633px"><span class="l">2.</span></div><div class="t m" style="left:815px;top:633px">이메일 마케팅 플랫폼(예: <span class="l">Mailchimp, Klaviyo</span>)에 업로드하여 발송합니다.</div>
<div class="t m" style="left:801px;top:652.500px"><span class="l">3.</span></div><div class="t m" style="left:815px;top:652.500px">버튼의 링크를 귀하의 서비스 페이지로 연결합니다.</div>

<div class="a" style="left:1222px;top:645px;width:58px;height:23px;border-radius:12px 0 0 12px;background:#fff;border:1px solid #e0e0e3;border-right:0"></div>
<svg style="left:1233px;top:652px;color:#111" width="10" height="10"><use href="#canvas"/></svg>
<div class="t" style="left:1249px;top:650px;font-size:9px">캔버스</div>

<div class="t" style="left:954px;top:678.500px;font-size:8px;color:#444;letter-spacing:-.03em">1개 항목이 선택되었습니다</div>
<svg style="left:981px;top:703px" width="11" height="12"><use href="#trash"/></svg>
<div class="t" style="left:997px;top:701.500px;font-size:9.500px;color:#7a1234">삭제</div>
<div class="a" style="left:972px;top:717px;width:60px;height:1.500px;background:#e040e0"></div>

</body></html>
